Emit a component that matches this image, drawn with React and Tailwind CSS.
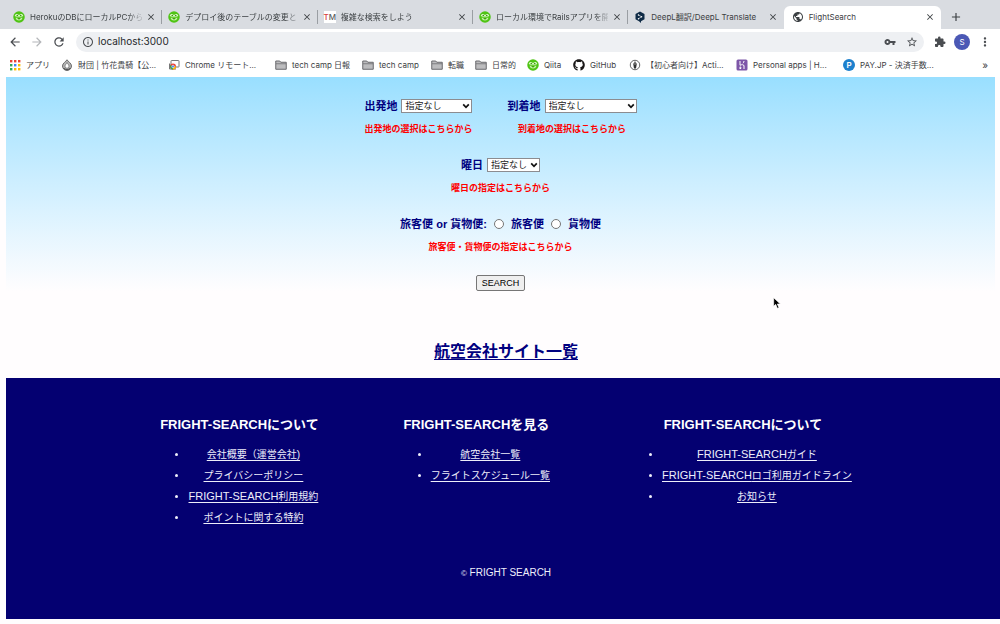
import React from "react";
import {
  MdArrowBack, MdArrowForward, MdRefresh, MdInfoOutline, MdVpnKey,
  MdStarBorder, MdExtension, MdMoreVert, MdPublic, MdAdd, MdClose,
} from "react-icons/md";
import { FaGithub } from "react-icons/fa";

function QiitaIcon() {
  return (
    <svg viewBox="0 0 24 24" className="size-3 shrink-0" aria-hidden="true">
      <circle cx="12" cy="12" r="11.500" fill="#4fc414" />
      <path d="M3.500 10c1-5 6-5 8.500-1.500C14.500 5 19.500 5 20.500 10c-2 1.500-5.500 2-8.500 1-3 1-6.500.5-8.500-1z" fill="#d9f8c4" />
      <circle cx="8.500" cy="9" r="1.500" fill="#2f8a00" />
      <circle cx="15.500" cy="9" r="1.500" fill="#2f8a00" />
      <path d="M5 13.500h14c-1 4-4 5.500-7 5.500s-6-1.500-7-5.500z" fill="#c6f3a8" />
      <path d="M8 14h8l-4 3.500z" fill="#3fa60a" />
    </svg>
  );
}

function TmIcon() {
  return (
    <span className="flex size-3 shrink-0 items-center justify-center bg-white text-[8px] leading-3 font-medium text-[#5b5b5b]" aria-hidden="true">
      <span className="text-[#d8403c]">T</span>M
    </span>
  );
}

function DeepLIcon() {
  return (
    <svg viewBox="0 0 24 24" className="size-3 shrink-0" aria-hidden="true">
      <path d="M12 1l9 5.200v10.300L14 20.500V24l-4-3.500L3 16.500V6.200z" fill="#0f2b46" />
      <path d="M9 8l6 3.500-6 4" fill="none" stroke="#fff" strokeWidth="1.200" />
      <circle cx="9" cy="8" r="1.500" fill="#fff" />
      <circle cx="15" cy="11.500" r="1.500" fill="#fff" />
      <circle cx="9" cy="15.500" r="1.500" fill="#fff" />
    </svg>
  );
}

const gridColors = ["#ea4335", "#ea4335", "#ea4335", "#34a853", "#4285f4", "#fbbc05", "#34a853", "#fbbc05", "#fbbc05"];

function AppsIcon() {
  return (
    <svg viewBox="0 0 12 12" className="size-3 shrink-0" aria-hidden="true">
      {gridColors.map((c, i) => (
        <rect key={i} x={1 + (i % 3) * 4} y={1 + Math.floor(i / 3) * 4} width="2.400" height="2.400" fill={c} />
      ))}
    </svg>
  );
}

function DropIcon() {
  return (
    <svg viewBox="0 0 24 24" className="size-3 shrink-0" aria-hidden="true">
      <path d="M12 1.500c2 4 9 6.500 9 12.500a9 9 0 0 1-18 0C3 8 10 5.500 12 1.500z" fill="#b5b5b5" stroke="#6d6d6d" strokeWidth="2" />
      <path d="M12 7c1 3 4 4 4 7.500a4 4 0 0 1-8 0C8 11 11 10 12 7z" fill="#fff" stroke="#6d6d6d" strokeWidth="1.500" />
      <path d="M5 18.500c4 3 10 3 14 0" fill="none" stroke="#555" strokeWidth="2.500" />
    </svg>
  );
}

function RemoteIcon() {
  return (
    <svg viewBox="0 0 24 24" className="size-3 shrink-0" aria-hidden="true">
      <rect x="6" y="3" width="16" height="13" rx="1" fill="#fff" stroke="#777" strokeWidth="2" />
      <path d="M3 9v11h13" fill="none" stroke="#777" strokeWidth="2" />
      <circle cx="10" cy="15" r="6" fill="#ea4335" />
      <path d="M10 15l-5.200-3A6 6 0 0 0 10 21z" fill="#34a853" />
      <path d="M10 15h6a6 6 0 0 1-6 6z" fill="#fbbc05" />
      <circle cx="10" cy="15" r="2.600" fill="#4285f4" stroke="#fff" />
    </svg>
  );
}

function FolderIcon() {
  return (
    <svg viewBox="0 0 24 20" className="h-2.5 w-3 shrink-0" aria-hidden="true">
      <path d="M1.500 18.500V2h8l2 2.500h11v14z" fill="#bcbcbe" stroke="#6a6a6e" strokeWidth="2" strokeLinejoin="round" />
      <path d="M2 7.500h20" stroke="#6a6a6e" strokeWidth="1.500" />
    </svg>
  );
}

function PenIcon() {
  return (
    <svg viewBox="0 0 24 24" className="size-3 shrink-0" aria-hidden="true">
      <circle cx="12" cy="12" r="9.500" fill="#fff" stroke="#555" strokeWidth="1.800" />
      <path d="M12 4l3.500 6-1.500 9h-4l-1.500-9z" fill="#333" />
      <path d="M12 5v7" stroke="#fff" strokeWidth="1" />
    </svg>
  );
}

function HerokuIcon() {
  return (
    <svg viewBox="0 0 24 24" className="size-3 shrink-0" aria-hidden="true">
      <rect x="1" y="1" width="22" height="22" rx="3" fill="#7d56a8" />
      <path d="M8 4v8.500c3-1.500 8-2 8 1.500v6M16 4c0 2-.8 3-2 4.500M8 15.500v4.500l2.500-2.300z" fill="none" stroke="#fff" strokeWidth="2" />
    </svg>
  );
}

function PayIcon() {
  return (
    <span className="flex size-3 shrink-0 items-center justify-center rounded-full bg-[#1d80cd] text-[8px] font-semibold text-white" aria-hidden="true">
      P
    </span>
  );
}

const tabs = [
  { icon: <QiitaIcon />, title: "HerokuのDBにローカルPCから", line: true },
  { icon: <QiitaIcon />, title: "デプロイ後のテーブルの変更と", line: true },
  { icon: <TmIcon />, title: "複雑な検索をしよう", line: true },
  { icon: <QiitaIcon />, title: "ローカル環境でRailsアプリを開", line: true },
  { icon: <DeepLIcon />, title: "DeepL翻訳/DeepL Translate" },
  { icon: <MdPublic className="size-3 shrink-0 text-[#3c4043]" />, title: "FlightSearch", active: true },
];

const bookmarks = [
  { icon: <AppsIcon />, label: "アプリ", width: "w-[52px]" },
  { icon: <DropIcon />, label: "財団 | 竹花貴騎【公...", width: "w-[107px]" },
  { icon: <RemoteIcon />, label: "Chrome リモート...", width: "w-[107px]" },
  { icon: <FolderIcon />, label: "tech camp 日報", width: "w-[87px]" },
  { icon: <FolderIcon />, label: "tech camp", width: "w-[69px]" },
  { icon: <FolderIcon />, label: "転職", width: "w-[44px]" },
  { icon: <FolderIcon />, label: "日常的", width: "w-[52px]" },
  { icon: <QiitaIcon />, label: "Qiita", width: "w-[46px]" },
  { icon: <FaGithub className="size-3 shrink-0 text-[#191717]" />, label: "GitHub", width: "w-[56px]" },
  { icon: <PenIcon />, label: "【初心者向け】Acti...", width: "w-[107px]" },
  { icon: <HerokuIcon />, label: "Personal apps | H...", width: "w-[107px]" },
  { icon: <PayIcon />, label: "PAY.JP - 決済手数...", width: "w-[107px]" },
];

function BrowserChrome() {
  return (
    <header className="font-['Inter','Noto_Sans_CJK_JP',sans-serif] text-[#3c4043]">
      <div className="flex h-[29px] bg-[#d9dce1] pt-1.5 pl-[7px]">
        {tabs.map((tab) => (
          <div
            key={tab.title}
            className={
              tab.active
                ? "flex min-w-0 flex-1 items-center rounded-t-md bg-white pr-1.5 pb-px pl-2"
                : "relative flex min-w-0 flex-1 items-center pr-1.5 pb-px pl-1.5"
            }
          >
            {tab.icon}
            <span
              className={
                tab.line
                  ? "ml-[5px] min-w-0 flex-1 text-[8px] leading-3 whitespace-nowrap [mask-image:linear-gradient(to_right,black_88%,#0003)]"
                  : "ml-[5px] min-w-0 flex-1 text-[8px] leading-3 whitespace-nowrap"
              }
            >
              {tab.title}
            </span>
            <button type="button" aria-label="タブを閉じる" className="ml-1 shrink-0">
              <MdClose className="size-2.5" />
            </button>
            {tab.line && <span className="absolute top-1 right-0 h-3.5 w-px bg-[#9a9ea3]" />}
          </div>
        ))}
        <div className="flex w-[59px] shrink-0 items-center pb-px pl-2">
          <button type="button" aria-label="新しいタブ">
            <MdAdd className="size-3.5" />
          </button>
        </div>
      </div>

      <div className="flex h-[25px] items-center bg-white pl-2 text-[#4a4d51]">
        <button type="button" aria-label="戻る"><MdArrowBack className="size-3.5" /></button>
        <button type="button" aria-label="進む" className="ml-2 text-[#b4b6b9]"><MdArrowForward className="size-3.5" /></button>
        <button type="button" aria-label="再読み込み" className="ml-2"><MdRefresh className="size-3.5" /></button>
        <div className="ml-2.5 flex h-5 min-w-0 flex-1 items-center rounded-full bg-[#eef0f3] px-1.5">
          <MdInfoOutline className="size-3 shrink-0" />
          <input
            aria-label="アドレス"
            defaultValue="localhost:3000"
            className="ml-1 min-w-0 flex-1 bg-transparent text-[10px] text-[#26282b] outline-none"
          />
          <button type="button" aria-label="パスワード"><MdVpnKey className="size-3" /></button>
          <button type="button" aria-label="ブックマークに追加" className="ml-2.5"><MdStarBorder className="size-3" /></button>
        </div>
        <button type="button" aria-label="拡張機能" className="ml-2.5"><MdExtension className="size-3" /></button>
        <button type="button" aria-label="プロフィール" className="ml-2 size-4 rounded-full bg-[#4b58b5] text-[8px] leading-4 text-white">
          S
        </button>
        <button type="button" aria-label="メニュー" className="mr-2 ml-2"><MdMoreVert className="size-3.5" /></button>
      </div>

      <nav className="flex h-[23px] items-center bg-white pr-3 pb-0.5 pl-[9px]" aria-label="ブックマーク">
        {bookmarks.map((b, i) => (
          <a key={i} href="#" className={"flex shrink-0 items-center gap-[5px] text-[8px] whitespace-nowrap " + b.width}>
            {b.icon}
            {b.label}
          </a>
        ))}
        <button type="button" aria-label="その他のブックマーク" className="ml-auto text-[10px] leading-3">»</button>
      </nav>
    </header>
  );
}

function SelectField({ id, label, hint, width }) {
  return (
    <div className="flex flex-col items-center gap-[7px]">
      <div className="flex h-4 items-center gap-1">
        <label htmlFor={id} className="text-[11px] leading-4 font-bold text-[#000080]">{label}</label>
        <span className="relative flex">
          <select
            id={id}
            className={"h-3.5 appearance-none border border-[#8c8c90] bg-white pl-[3px] text-[9px] leading-3 text-[#222] " + width}
          >
            <option>指定なし</option>
          </select>
          <svg viewBox="0 0 8 6" className="pointer-events-none absolute top-1 right-0.5 h-1.5 w-2" aria-hidden="true">
            <path d="M1.200 1.300L4 4.300l2.800-3" fill="none" stroke="#111" strokeWidth="1.700" />
          </svg>
        </span>
      </div>
      <p className="text-[9px] leading-4 font-bold text-[#ff0000]">{hint}</p>
    </div>
  );
}

function SearchForm() {
  return (
    <form
      onSubmit={(e) => e.preventDefault()}
      className="mr-[5px] ml-1.5 flex flex-col items-center gap-5 bg-linear-to-b from-[#99dfff] to-[#fffdfe] pt-[21px]"
    >
      <div className="flex gap-[35px]">
        <SelectField id="from" label="出発地" hint="出発地の選択はこちらから" width="w-[71px]" />
        <SelectField id="to" label="到着地" hint="到着地の選択はこちらから" width="w-[92px]" />
      </div>
      <SelectField id="day" label="曜日" hint="曜日の指定はこちらから" width="w-[53px]" />
      <div className="flex flex-col items-center gap-[7px]">
        <div className="flex h-4 items-center gap-[7px] text-[11px] leading-4 font-bold text-[#000080]">
          <span>旅客便 or 貨物便:</span>
          <input
            id="passenger" type="radio" name="kind"
            className="size-2.5 appearance-none rounded-full border border-[#767676] bg-white checked:bg-[#0075ff]"
          />
          <label htmlFor="passenger">旅客便</label>
          <input
            id="cargo" type="radio" name="kind"
            className="size-2.5 appearance-none rounded-full border border-[#767676] bg-white checked:bg-[#0075ff]"
          />
          <label htmlFor="cargo">貨物便</label>
        </div>
        <p className="text-[9px] leading-4 font-bold text-[#ff0000]">旅客便・貨物便の指定はこちらから</p>
      </div>
      <button type="submit" className="h-4 rounded-xs border border-[#767676] bg-[#efefef] px-[5px] text-[9px] leading-3 text-black">
        SEARCH
      </button>
    </form>
  );
}

const columns = [
  {
    title: "FRIGHT-SEARCHについて",
    links: [["", "会社概要（運営会社)"], ["", "プライバシーポリシー"], ["FRIGHT-SEARCH", "利用規約"], ["", "ポイントに関する特約"]],
  },
  {
    title: "FRIGHT-SEARCHを見る",
    links: [["", "航空会社一覧"], ["", "フライトスケジュール一覧"]],
  },
  {
    title: "FRIGHT-SEARCHについて",
    links: [["FRIGHT-SEARCH", "ガイド"], ["FRIGHT-SEARCH", "ロゴ利用ガイドライン"], ["", "お知らせ"]],
  },
];

function Footer() {
  return (
    <footer className="ml-1.5 bg-[#040071] pt-[37px] pb-[37px] pl-1.5 text-[#eeeefa]">
      <div className="flex justify-center gap-[84px]">
        {columns.map((col, i) => (
          <section key={i}>
            <h3 className="text-center text-[13px] leading-5 font-bold text-white">{col.title}</h3>
            <ul className="mt-[9px] list-disc pl-7 text-center text-[10px] leading-[21px]">
              {col.links.map(([latin, text]) => (
                <li key={text}>
                  <a href="#" className="underline underline-offset-2">
                    {latin && <span className="text-[11px]">{latin}</span>}
                    {text}
                  </a>
                </li>
              ))}
            </ul>
          </section>
        ))}
      </div>
      <p className="mt-[37px] text-center text-[10px] leading-4">
        <span className="text-[8px]">©</span> FRIGHT SEARCH
      </p>
    </footer>
  );
}

export default function App() {
  return (
    <div className="relative min-h-screen bg-[#fffdfe]">
      <BrowserChrome />
      <main className="font-['Liberation_Sans','Noto_Sans_CJK_JP',sans-serif]">
        <SearchForm />
        <h2 className="mt-[49px] pb-3.5 pl-3 text-center text-base leading-6 font-bold">
          <a href="#" className="text-[#000080] underline underline-offset-2">航空会社サイト一覧</a>
        </h2>
        <Footer />
      </main>
      <svg viewBox="0 0 12 18" className="pointer-events-none absolute top-[297px] left-[773px] h-3 w-2" aria-hidden="true">
        <path d="M1 1v13l3-3 2.500 6 2.500-1-2.500-5.500H11z" fill="#000" stroke="#fff" strokeWidth="1" />
      </svg>
    </div>
  );
}
